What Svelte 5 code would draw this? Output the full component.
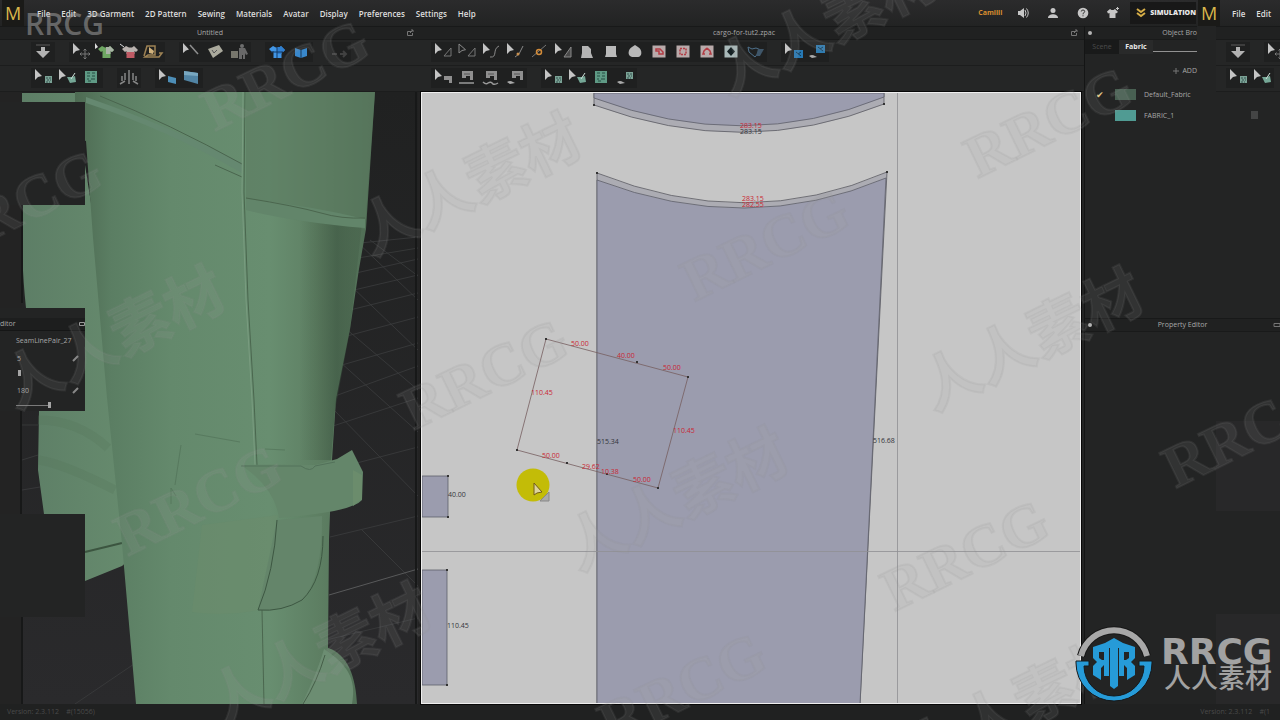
<script lang="ts">
  const menus = ["File", "Edit", "3D Garment", "2D Pattern", "Sewing", "Materials", "Avatar", "Display", "Preferences", "Settings", "Help"]

  const cursor = `<path d="M4 1v11l3-3 4-1z" fill="#c4c4c4"/>`
  const dimCursor = `<path d="M4 2v9l3-2.500 3.500-.8z" fill="none" stroke="#8a8a8a"/>`
  const block = (fill: string, x = 14, y = 8) =>
    `<rect x="${x}" y="${y}" width="7" height="7" fill="${fill}"/><path d="M${x + 1} ${y + 2}h2m1 0h2m-4 2h2m1 0h1m-5 2h2m1 0h1" stroke="#253c3c" stroke-width=".8"/>`
  const shirt = (fill: string, left = fill) =>
    `<path d="M12 4l3 1.500h3L20 4l4 4-2 2-1.500-1v7h-8V9L11 10 8 7z" fill="${left}"/><path d="M16 5h3l1-1 4 4-2 2-1.500-1v3H16z" fill="${fill}"/>`
  const tile = (shape: string, fill = "#b9aaaa") => `<rect x="5.500" y="3.500" width="13" height="12" fill="${fill}"/>${shape}`
  const machine = `<path d="M7 3h11v9h-3V8h-4v2H7z" fill="#8f8f8f"/><path d="M9 6h6" stroke="#555"/>`
  const eye = `<path d="M4 14q3-2 6 0l2 1-5 1z" fill="#aaa"/>`

  const icons: Record<string, string> = {
    down: `<path d="M5 3h14" stroke="#3d3d3d" stroke-width="2"/><path d="M10 5h4v4h5l-7 7-7-7h5z" fill="#b2b2b2"/>`,
    move: `${cursor}<path d="M16 7v10M11 12h10M14.500 8.500L16 7l1.500 1.500M14.500 15.500L16 17l1.500-1.500M12.500 10.500L11 12l1.500 1.500M19.500 10.500L21 12l-1.500 1.500" fill="none" stroke="#777"/>`,
    greenShirt: `<g transform="translate(-3)">${shirt("#a9b3a6", "#6fa763")}</g><path d="M2 1v6l3-2z" fill="#ddd"/>`,
    redShirt: `<g transform="translate(-3)"><path d="M12 4l3 1.500h3L20 4l4 4-2 2-1.500-1v3h-8V9L11 10 8 7z" fill="#b9b2ae"/><path d="M12.500 10h8v6h-8z" fill="#bf5a64"/></g><path d="M3 2l4 3" stroke="#ddd"/>`,
    fold: `<path d="M3 14L6 4h8v9H7l-3 2h14l3-4h-3" fill="none" stroke="#9f8354" stroke-width="1.500"/><path d="M8 5l5 4-1 3-4-1z" fill="#d1b27c"/>`,
    pin: `<path d="M4 1v10l3-2.500 3-1z" fill="#c4c4c4"/><path d="M11 3l8 9" stroke="#8f8f8f" stroke-width="1.500"/>`,
    note: `<path d="M5 7l11-4 4 6-10 7z" fill="#aaa99c"/><path d="M9 8l2 3 3-3" stroke="#555" fill="none"/>`,
    avatar: `<circle cx="15" cy="4" r="2" fill="#6d6d6d"/><path d="M12 6h6l3 6-2 1-1-2v6h-2v-4h-1v4h-3z" fill="#686868"/><rect x="4" y="9" width="7" height="7" fill="#77766c"/>`,
    blueShirt: `<g transform="translate(-4)">${shirt("#2f7fd0", "#4296e5")}</g><path d="M12 5v11M6 10h12" stroke="#123a66"/>`,
    blueFold: `<path d="M6 6l6 2 6-2v8l-6 2-6-2z" fill="#3988cc"/><path d="M12 8v8" stroke="#1a3858"/>`,
    faint: `<path d="M5 12h5m3 0h6M16 9l3 3-3 3" stroke="#414141" stroke-width="2" fill="none"/>`,
    texture: cursor + block("#7ba396"),
    textureTurn: `${cursor}<path d="M12 9l3 6 6-1-1-6-3 1z" fill="#75a796"/><path d="M20 5l-4 6" stroke="#cfe0da"/>`,
    pattern: `<rect x="6" y="3" width="12" height="12" fill="#5f9a85"/><path d="M8 5h3m2 0h3M8 8h3m2 0h3M8 11h2m2 0h4M9 13h3" stroke="#264c43"/>`,
    puppet: `<path d="M12 2v14M8 5v7M16 5v7M5 8v5M19 8v5M3 16l5-3M21 16l-5-3" stroke="#858585" fill="none" stroke-width="1.500"/>`,
    cloth: `${cursor}<path d="M13 8l8 2v6l-8-2z" fill="#4d8eb7"/>`,
    clothBig: `<path d="M5 3l14 2v11L5 12z" fill="#5184a4"/><path d="M5 3l14 2v3L5 7z" fill="#78a7c0"/>`,
    edit: `${cursor}<path d="M13 14l7-8v8z" fill="none" stroke="#777"/>`,
    editDim: `${dimCursor}<path d="M13 14l7-8v8z" fill="none" stroke="#777"/>`,
    curve: `${cursor}<path d="M11 15c8 1 2-8 9-11" fill="none" stroke="#888"/>`,
    points: `${cursor}<path d="M12 15l4-3 4-8" fill="none" stroke="#888"/><circle cx="15" cy="12" r="1.500" fill="#c98f4d"/>`,
    addPoint: `<path d="M5 15L19 3" stroke="#777"/><circle cx="12" cy="10" r="2.500" fill="none" stroke="#d28b39" stroke-width="1.500"/>`,
    editLine: `${cursor}<path d="M13 15l7-10v10z" fill="#4a4a4a" stroke="#888"/>`,
    polygon: `<path d="M7 4h6l3 3v4l2 5H6l1-5z" fill="#b4b4b4"/>`,
    rectangle: `<path d="M7 4h10v8l1 3H6l1-3z" fill="#bababa"/>`,
    circle: `<path d="M12 3l3 2c5 3 4 10 0 10H9C4 14 5 7 9 5z" fill="#b8b8b8"/>`,
    innerPoly: tile(`<path d="M9 7h4l3 3v2h-4V9H9z" fill="none" stroke="#b33c44" stroke-width="1.500"/>`),
    innerRect: tile(`<rect x="9" y="6.500" width="6" height="6" fill="none" stroke="#b33c44" stroke-width="1.500" stroke-dasharray="2 1"/>`),
    innerCircle: tile(`<path d="M12 6l3 3 1 3h-2M12 6L9 9l-1 3h2" fill="none" stroke="#b33c44" stroke-width="1.500"/>`),
    dart: tile(`<path d="M12 5l4 4.500-4 4.500-4-4.500z" fill="#142023"/>`, "#a9b9b9"),
    trace: `<path d="M5 5l4 2 4-1 5 2-6 7-6-5z" fill="none" stroke="#4e718c"/><path d="M15 7h6l-4 7h-4z" fill="#3f5669"/>`,
    blueSelect: `${cursor}<rect x="13" y="8" width="9" height="8" fill="#2679b5"/><path d="M15 10l5 4m0-4l-3 2" stroke="#103956"/>`,
    blueShow: `${eye}<rect x="11" y="3" width="9" height="8" fill="#2f7cb1"/><path d="M13 5l5 4m0-4l-3 2" stroke="#103956"/>`,
    sewEdit: `${cursor}<path d="M13 8h8v7h-3v-3h-5z" fill="#8f8f8f"/>`,
    sew: `${machine}<path d="M4 15h15" stroke="#9a9a9a" stroke-width="1.500"/>`,
    sewFree: `${machine}<path d="M4 14q3 3 5 1 3-2 5 1 2 1 5-1" fill="none" stroke="#9a9a9a" stroke-width="1.500"/>`,
    sewShow: `<g transform="translate(2)">${machine}</g>${eye}`,
    textureShow: eye + block("#7ba396", 13, 4),
  }

  const sceneTools = [
    [["down"], ["move", "greenShirt", "redShirt", "fold"], ["pin", "note", "avatar"], ["blueShirt", "blueFold"], ["faint"]],
    [["texture", "textureTurn", "pattern"], ["puppet"], ["cloth", "clothBig"]],
  ]
  const patternTools = [
    [["edit", "editDim", "curve", "points", "addPoint", "editLine", "polygon", "rectangle", "circle", "innerPoly", "innerRect", "innerCircle", "dart", "trace"], ["blueSelect", "blueShow"]],
    [["sewEdit", "sew", "sewFree", "sewShow"], ["texture", "textureTurn", "pattern", "textureShow"]],
  ]
  const sideTools = [[["down"], ["move"]], [["texture", "textureTurn"]]]

  const fabrics = [
    { name: "Default_Fabric", color: "#486052", active: true },
    { name: "FABRIC_1", color: "#509b93", active: false },
  ]

  const measures = [
    { x: 740, y: 128, text: "283.15", red: true },
    { x: 740, y: 134, text: "283.15", red: false },
    { x: 742, y: 201, text: "283.15", red: true },
    { x: 742, y: 207, text: "282.55", red: true },
    { x: 571, y: 346, text: "50.00", red: true },
    { x: 617, y: 358, text: "40.00", red: true },
    { x: 663, y: 370, text: "50.00", red: true },
    { x: 531, y: 395, text: "110.45", red: true },
    { x: 673, y: 433, text: "110.45", red: true },
    { x: 542, y: 458, text: "50.00", red: true },
    { x: 582, y: 469, text: "29.62", red: true },
    { x: 601, y: 474, text: "10.38", red: true },
    { x: 633, y: 482, text: "50.00", red: true },
    { x: 597, y: 444, text: "515.34", red: false },
    { x: 873, y: 443, text: "516.68", red: false },
    { x: 448, y: 497, text: "40.00", red: false },
    { x: 447, y: 628, text: "110.45", red: false },
  ]

  const corners = [
    [594, 105], [884, 104], [597, 173], [887, 172], [546, 339], [688, 377], [658, 488], [517, 450],
    [637, 362], [567, 463], [607, 474], [448, 476], [448, 517], [447, 570], [447, 685],
  ]

  const latinMarks = [[18, 205], [285, 75], [198, 500], [484, 374], [765, 245], [1048, 122], [965, 555], [682, 688], [1246, 432]]
  const hanMarks = [[114, 339], [470, 186], [827, 26], [677, 501], [1032, 341], [320, 656], [1018, 707]]

  let tab = $state("Fabric")
  let stitch = $state("5")
  let angle = $state("180")
</script>

{#snippet toolRows(rows: string[][][])}
  {#each rows as row}
    <div class="toolbar">
      {#each row as group}
        <div class="tool-group">
          {#each group as name}
            <button class="tool" aria-label={name}>
              <svg viewBox="0 0 24 20">{@html icons[name]}</svg>
            </button>
          {/each}
        </div>
      {/each}
    </div>
  {/each}
{/snippet}

{#snippet popOut()}
  <svg class="pop-out" viewBox="0 0 8 8"><path d="M5 2.500H1.500v4h5V4M4 4l3-3M5 1h2v2" /></svg>
{/snippet}

<div class="page">
  <header>
    <span class="logo">M</span>
    <nav>
      {#each menus as item}
        <button class="menu">{item}</button>
      {/each}
    </nav>
    <div class="account">
      <span class="user">Camilli</span>
      <button class="status" aria-label="Sound">
        <svg viewBox="0 0 12 12"><path d="M1 4h2l4-3v10L3 8H1z" /><path d="M8 3q2 3 0 6M9.500 1.500q3.500 4.500 0 9" class="line" /></svg>
      </button>
      <button class="status" aria-label="Profile">
        <svg viewBox="0 0 12 12"><circle cx="6" cy="3.500" r="2.500" /><path d="M1 11c0-5 10-5 10 0z" /></svg>
      </button>
      <button class="status" aria-label="Help">
        <svg viewBox="0 0 12 12"><circle cx="6" cy="6" r="5.300" /><path d="M4.300 4.500q0-1.500 1.700-1.500t1.700 1.500q0 1-1.700 2v.8M6 8.300v1" class="mark" /></svg>
      </button>
      <button class="status" aria-label="Garments">
        <svg viewBox="0 0 12 12"><path d="M3 2l1.500 1h2L8 2l3 3-2 1.500L8.500 6v5h-6V6L1 6.500 0 4.500z" /><path d="M10.500 0v3M9 1.500h3" class="line" /></svg>
      </button>
      <button class="simulation">
        <svg viewBox="0 0 10 10"><path d="M1 1l4 3 4-3M1 5l4 3 4-3" /></svg>
        SIMULATION
      </button>
    </div>
    <span class="logo">M</span>
    <nav class="side-nav">
      <button class="menu">File</button>
      <button class="menu">Edit</button>
    </nav>
  </header>

  <main>
    <section class="column">
      <div class="titlebar"><span>Untitled</span>{@render popOut()}</div>
      <div class="scene-tools">{@render toolRows(sceneTools)}</div>
      <div class="viewport">
        <svg class="art" viewBox="0 92 420 612" preserveAspectRatio="xMidYMin slice">
          <defs>
            <linearGradient id="leg" x1="0" x2="1">
              <stop offset="0" stop-color="#4d6a52" />
              <stop offset=".12" stop-color="#5b7e63" />
              <stop offset=".32" stop-color="#64896c" />
              <stop offset=".65" stop-color="#688e70" />
              <stop offset=".82" stop-color="#5d7e62" />
              <stop offset="1" stop-color="#4e6b53" />
            </linearGradient>
            <linearGradient id="back" x1="0" x2="1">
              <stop offset="0" stop-color="#5d7e66" />
              <stop offset="1" stop-color="#688d6f" />
            </linearGradient>
            <linearGradient id="shade" x1="0" x2="1">
              <stop offset="0" stop-color="#40583f" stop-opacity="0" />
              <stop offset=".6" stop-color="#364e3b" stop-opacity=".5" />
              <stop offset="1" stop-color="#405943" stop-opacity=".3" />
            </linearGradient>
            <linearGradient id="floor" x1="0" x2="0" y1="0" y2="1">
              <stop offset="0" stop-color="#202121" />
              <stop offset="1" stop-color="#2a2a2c" />
            </linearGradient>
          </defs>
          <rect y="92" width="420" height="612" fill="#232323" />
          <rect x="22" y="92" width="396" height="612" fill="url(#floor)" />
          <path
            class="floor-grid"
            d="M360 243l58-6M358 258l60-10M356 273l62-14M354 290l64-15M350 310l68-17M347 336l71-19M342 365l76-22M335 396l83-30M333 426l85-28M330 470l88-23M330 537l88-21M326 640l92-22M355 240l63 60M370 240l48 36M350 285l68 65M345 328l73 62M340 362l78 70M334 410l84 86M362 530l56 56M22 425h16M22 460l16-5M22 490l18-3M75 704l59-40"
          />
          <path d="M329 595l89-26" stroke="#58595a" />
          <path d="M22 93h53v9H22zM22 205h63v-40l60 380-23 21-37 15v-67H44l-6-44 1-59h46V308H26q-5-45-4-103" fill="url(#back)" />
          <path d="M39 460q25 4 76 30M38 420q40 0 70 28" stroke="#557359" stroke-width="9" opacity=".25" fill="none" />
          <path d="M85 552l37-9" stroke="#3c5540" stroke-width="2" />
          <path d="M75 92h300l-9 137-7 40-9 60-14 70-4 61-3 80-1 108c20 6 28 30 29 56H136l-14-160-15-146-14-160-7-97-11-3z" fill="url(#leg)" />
          <path d="M246 92h129l-10 137-119-30z" fill="#5c7b61" opacity=".6" />
          <path d="M300 210l62 14-12 106-15 80-4 50h-32z" fill="url(#shade)" />
          <path d="M86 103q80 26 156 70v-10q-70-36-156-66z" fill="#658870" />
          <path d="M100 96q70 28 142 68M215 165l27 12" fill="none" stroke="#4a654e" />
          <path d="M246 199q60 6 119 20v9q-70-6-119-18z" fill="#62856a" />
          <path d="M246 198q50 8 75 15 20 6 44 5" fill="none" stroke="#4b664e" />
          <path d="M245 92l-1 100 4 108 6 100 3 65M262 610l2 94" fill="none" stroke="#4b674f" />
          <path d="M243 92l-1 100 4 108 6 100 3 65" fill="none" stroke="#7a9c80" />
          <path d="M181 445l-6 40M171 488v16m0-16l5 8M195 434l45 8M265 449l20 1" stroke="#4b6a51" opacity=".5" />
          <path d="M202 525l76-10-20 95q-33 7-66 2z" fill="#6c8b6c" opacity=".5" />
          <path d="M277 520l-19 90q24 2 44-10 21-23 20-84z" fill="#64856a" />
          <path d="M277 520q-3 52-19 90 24 2 44-10 21-20 21-64" fill="none" stroke="#3d5742" />
          <path d="M241 465q45-1 74 0l22-6 15-9 11 22-1 28q-10 12-83 18-4-30-38-53z" fill="#64866a" />
          <path d="M241 466h60q10 7 14 0l20-4" stroke="#53725a" fill="none" />
          <path d="M362 475v24l-9 7v-36z" fill="#6b8c6c" />
          <path d="M352 704c5-25-5-40-28-55-5 18-14 38-22 55z" fill="#6c8d72" />
          <path d="M325 655q-8 27-22 49" fill="none" stroke="#455e48" />
          <path d="M0 102h85v103H0zM0 308h85v103H0zM0 514h85v103H0z" fill="#232424" />
          <path d="M22 205v98M21 411v103M22 617v87M416 92v612" stroke="#171818" stroke-width="2" />
        </svg>
        <aside class="editor">
          <div class="editor-title"><span>ditor</span><svg viewBox="0 0 6 6"><path d="M.5 1.500h5v3h-5z" /></svg></div>
          <p>SeamLinePair_27</p>
          <input class="value" aria-label="Stitch" bind:value={stitch} />
          <input class="slider bare" type="range" aria-label="Stitch slider" min="0" max="100" value="5" />
          <input class="value" aria-label="Angle" bind:value={angle} />
          <input class="slider" type="range" aria-label="Angle slider" min="0" max="180" value="180" />
          <svg class="pencils" viewBox="0 0 8 40"><path d="M1 7l5-5M1 39l5-5" /></svg>
        </aside>
      </div>
    </section>

    <section class="column">
      <div class="titlebar pattern-title"><span>cargo-for-tut2.zpac</span>{@render popOut()}</div>
      <div>{@render toolRows(patternTools)}</div>
      <div class="board">
        <svg class="art" viewBox="422 93 658 610" preserveAspectRatio="xMidYMin slice">
          <rect x="422" y="93" width="658" height="612" fill="#c6c6c6" />
          <path d="M594 93v12q150 55 290-1V93z" class="seam" />
          <path d="M594 93v5q150 56 290-1v-4z" class="piece" />
          <path d="M597 173q150 60 290-1l-27 532H597z" class="seam" />
          <path d="M597 180q150 57 289-2l-26 526H597z" class="piece" />
          <path d="M422 476h26v41h-26zM422 570h25v115h-25z" class="piece" />
          <path d="M897.500 93v611M422 551.500h658" stroke="#8f8f93" stroke-width=".8" />
          <path d="M546 339l142 38-30 111-141-38z" fill="none" stroke="#765e60" stroke-width=".8" />
          {#each corners as [x, y]}
            <rect x={x - 1} y={y - 1} width="2" height="2" fill="#333" />
          {/each}
          {#each measures as m}
            <text x={m.x} y={m.y} class="measure" class:red={m.red}>{m.text}</text>
          {/each}
          <circle cx="533" cy="485" r="16.500" fill="#c3bc07" />
          <path d="M540 501l9-9v9z" fill="#aaa" stroke="#888" />
          <path d="M534 483v12l3-2 5-1z" fill="#ddd39c" stroke="#725d16" />
        </svg>
      </div>
    </section>

    <section class="column side">
      <div class="side-top">
        <div class="browser">
          <div class="titlebar"><span class="dot"></span><span class="cut">Object Bro</span></div>
          <div class="tabs">
            <button class="tab" class:active={tab === "Scene"} onclick={() => (tab = "Scene")}>Scene</button>
            <button class="tab" class:active={tab === "Fabric"} onclick={() => (tab = "Fabric")}>Fabric</button>
            <span class="tab-line"></span>
          </div>
          <button class="add"><svg viewBox="0 0 8 8"><path d="M4 1v6M1 4h6" /></svg>ADD</button>
          <ul>
            {#each fabrics as fabric}
              <li>
                <label>
                  <input type="checkbox" checked={fabric.active} />
                  <span class="swatch" style="background: {fabric.color}"></span>
                  {fabric.name}
                </label>
              </li>
            {/each}
          </ul>
        </div>
        <div class="strip">
          <div class="titlebar"></div>
          <div>{@render toolRows(sideTools)}</div>
          <svg class="list-icon" viewBox="0 0 8 8"><path d="M0 1h7M0 3h7M0 5h7M0 7h7" /></svg>
        </div>
      </div>
      <div class="side-bottom">
        <div class="titlebar"><span class="dot"></span><span>Property Editor</span><svg class="pop-out edge" viewBox="0 0 8 8"><path d="M2 2.500h6v3H2z" /></svg></div>
        <div class="ghost"><span></span><span></span></div>
      </div>
    </section>
  </main>

  <footer>
    <span>Version: 2.3.112 &nbsp; &nbsp;#(15056)</span>
    <span>Version: 2.3.112 &nbsp; &nbsp;#(1</span>
  </footer>

  <svg class="marks" viewBox="0 0 1280 720" preserveAspectRatio="xMidYMid slice">
    {#each latinMarks as [x, y]}
      <text class="latin" transform="translate({x} {y}) rotate(-26)" y="20">RRCG</text>
    {/each}
    {#each hanMarks as [x, y]}
      <text class="han" transform="translate({x} {y}) rotate(-26)" y="20">人人素材</text>
    {/each}
    <text class="corner" x="25" y="35">RRCG</text>
    <circle cx="1114" cy="663" r="33" fill="#232424" />
    <path d="M1081 656a34 34 0 0 1 66 0" fill="none" stroke="#171717" stroke-width="8" />
    <path d="M1081 656a34 34 0 0 1 66 0" fill="none" stroke="#a8a8a8" stroke-width="6" />
    <path d="M1076 661h13v5h-5a30 30 0 0 0 60 0h-5v-5h13v2a38 38 0 0 1-76 0z" fill="#269bd8" stroke="#151a1d" />
    <g fill="#269bd8" fill-rule="evenodd">
      <path d="M1114 638l9 5 12 4v1H1093v-1l12-4z" />
      <path d="M1110 647h8v39l-4 3-4-3z" />
      <path d="M1119 647h16v11l-4 4 4 4v9l-8 5v-12l-3-3v11h-5zM1124 652v8h2l3-2v-6z" />
      <path d="M1109 647h-16v11l4 4-4 4v9l8 5v-12l3-3v11h5zM1104 652v8h-2l-3-2v-6z" />
    </g>
    <text class="brand" x="1161" y="664">RRCG</text>
    <text class="brand-han" x="1164" y="688">人人素材</text>
  </svg>
</div>

<style>
  :global(body) {
    margin: 0;
    background: #232424;
  }

  .page {
    position: relative;
    display: flex;
    flex-direction: column;
    min-height: 100vh;
    overflow: hidden;
    background: #232424;
    color: #a8a8a8;
    font-family: "Open Sans", "Noto Sans CJK SC", sans-serif;
    font-size: 7px;
    line-height: 10px;
  }

  button,
  input {
    margin: 0;
    padding: 0;
    border: 0;
    background: none;
    color: inherit;
    font: inherit;
  }

  header {
    display: flex;
    align-items: center;
    height: 26px;
    background: linear-gradient(#2b2b2c, #222323);
  }

  .logo {
    width: 22px;
    margin-left: 2px;
    background: #1a1a18;
    color: #d9b64b;
    font-size: 18px;
    line-height: 26px;
    text-align: center;
  }

  nav {
    display: flex;
    gap: 11px;
    padding: 1px 0 0 13px;
  }

  .menu {
    color: #dedede;
    font-size: 8px;
    font-weight: 600;
    white-space: nowrap;
  }

  .account {
    display: flex;
    align-items: center;
    margin-left: auto;
  }

  .user {
    margin-right: 15px;
    color: #d98e2f;
    font-size: 7px;
    font-weight: 700;
  }

  .status {
    display: flex;
    width: 12px;
    margin-right: 18px;
  }

  .status:nth-last-child(2) {
    margin-right: 11px;
  }

  .status svg {
    width: 12px;
    height: 12px;
    fill: #c6c6c6;
  }

  .status .line {
    fill: none;
    stroke: #c6c6c6;
  }

  .status .mark {
    fill: none;
    stroke: #333;
  }

  .simulation {
    display: flex;
    align-items: center;
    gap: 4px;
    height: 22px;
    padding-left: 6px;
    background: #181818;
    color: #e8e8e8;
    font-size: 7px;
    font-weight: 800;
  }

  .simulation svg {
    width: 10px;
    height: 10px;
    fill: none;
    stroke: #d7ae47;
    stroke-width: 2;
  }

  .side-nav {
    width: 48px;
    padding-left: 12px;
  }

  main {
    display: grid;
    grid-template-columns: minmax(0, 420fr) minmax(0, 664fr) minmax(0, 196fr);
    flex: 1;
  }

  .column {
    display: flex;
    flex-direction: column;
    min-width: 0;
  }

  .titlebar {
    position: relative;
    display: flex;
    align-items: center;
    justify-content: center;
    box-sizing: border-box;
    height: 14px;
    border-top: 1px solid #181919;
    border-bottom: 1px solid #191a1a;
    background: #202121;
  }

  .pattern-title {
    padding-right: 16px;
  }

  .pop-out {
    position: absolute;
    right: 6px;
    width: 8px;
    height: 8px;
    fill: none;
    stroke: #757575;
  }

  .edge {
    right: 0;
  }

  .toolbar {
    display: flex;
    align-items: center;
    gap: 14px;
    box-sizing: border-box;
    height: 26px;
    padding: 0 0 1px 11px;
    border-bottom: 1px solid #1c1d1d;
    background: #252626;
    overflow: hidden;
  }

  .scene-tools .toolbar {
    padding-left: 31px;
  }

  .tool-group {
    display: flex;
    background: #1f2020;
  }

  .tool {
    display: flex;
    width: 24px;
    height: 20px;
  }

  .tool svg {
    width: 24px;
    height: 20px;
  }

  .viewport,
  .board {
    position: relative;
    flex: 1;
    overflow: hidden;
  }

  .board {
    margin: 0 3px 0 1px;
    border: 1px solid #eee;
    outline: 1px solid #080808;
  }

  .art {
    position: absolute;
    inset: 0;
    width: 100%;
    height: 100%;
  }

  .floor-grid {
    fill: none;
    stroke: #3b3c3e;
    stroke-width: 0.8;
  }

  .seam {
    fill: #acacb3;
    stroke: #5a5a62;
    stroke-width: 0.8;
  }

  .piece {
    fill: #9b9cae;
    stroke: #5e5f69;
    stroke-width: 0.8;
  }

  .measure {
    fill: #34343a;
    font-size: 7px;
  }

  .red {
    fill: #ca2634;
  }

  .editor {
    position: absolute;
    top: 226px;
    left: 0;
    width: 85px;
  }

  .editor-title {
    display: flex;
    justify-content: space-between;
    align-items: center;
    height: 12px;
    border-bottom: 1px solid #151616;
    background: #1d1e1e;
  }

  .editor-title svg {
    width: 6px;
    height: 6px;
    fill: none;
    stroke: #999;
  }

  .editor p {
    margin: 5px 0 8px 16px;
  }

  .value {
    display: block;
    width: 50px;
    height: 10px;
    margin-left: 17px;
  }

  .slider {
    display: block;
    width: 35px;
    height: 6px;
    margin: 6px 0 0 16px;
    appearance: none;
    background: linear-gradient(#7a7a7a, #7a7a7a) center / 100% 1px no-repeat;
  }

  .bare {
    margin-bottom: 10px;
    background: none;
  }

  .slider::-webkit-slider-thumb {
    width: 3px;
    height: 6px;
    appearance: none;
    background: #a5a5a5;
  }

  .pencils {
    position: absolute;
    top: 36px;
    right: 5px;
    width: 8px;
    height: 40px;
    stroke: #888;
    stroke-width: 2;
  }

  .side {
    border-left: 1px solid #141515;
  }

  .side-top {
    display: flex;
    flex: 292;
  }

  .browser {
    width: 112px;
    flex: none;
  }

  .dot {
    position: absolute;
    left: 3px;
    width: 4px;
    height: 4px;
    border-radius: 2px;
    background: #b5b5b5;
  }

  .cut {
    margin-left: auto;
    white-space: nowrap;
  }

  .tabs {
    display: flex;
    height: 14px;
  }

  .tab {
    width: 34px;
    background: #191a1a;
    color: #4c4c4c;
  }

  .active {
    background: #292a2a;
    color: #e8e8e8;
    font-weight: 700;
  }

  .tab-line {
    flex: 1;
    height: 11px;
    border-bottom: 1px solid #929292;
  }

  .add {
    display: flex;
    align-items: center;
    gap: 2px;
    margin: 12px 0 8px auto;
  }

  .add svg {
    width: 8px;
    height: 8px;
    stroke: #777;
  }

  ul {
    margin: 0;
    padding: 0;
    list-style: none;
  }

  label {
    display: flex;
    align-items: center;
    height: 21px;
    padding-left: 11px;
    white-space: nowrap;
  }

  input[type="checkbox"] {
    width: 10px;
    height: 10px;
    appearance: none;
  }

  input[type="checkbox"]:checked::before {
    content: "✔";
    display: block;
    color: #e0c78b;
    font-size: 9px;
  }

  .swatch {
    width: 21px;
    height: 11px;
    margin: 0 8px 0 9px;
  }

  .strip {
    flex: 1;
    min-width: 0;
    padding-left: 19px;
  }

  .strip .toolbar {
    padding-left: 10px;
  }

  .list-icon {
    display: block;
    width: 8px;
    height: 8px;
    margin: 19px 0 0 35px;
    stroke: #666;
  }

  .side-bottom {
    display: flex;
    flex: 386;
    flex-direction: column;
  }

  .ghost {
    display: flex;
    flex: 1;
    flex-direction: column;
    justify-content: flex-end;
    gap: 103px;
    width: 64px;
    margin-left: auto;
  }

  .ghost span {
    height: 90px;
    background: #282829;
  }

  footer {
    display: flex;
    justify-content: space-between;
    height: 13px;
    padding: 3px 10px 0 7px;
    background: #202121;
    color: #4a4a4a;
  }

  .marks {
    position: absolute;
    inset: 0;
    width: 100%;
    height: 100%;
    pointer-events: none;
  }

  .latin,
  .han {
    fill: #a4a4a4;
    fill-opacity: 0.12;
    stroke: #888;
    stroke-opacity: 0.12;
    stroke-width: 2;
    text-anchor: middle;
  }

  .latin {
    font-family: "Liberation Serif", serif;
    font-size: 60px;
    font-weight: 700;
  }

  .han {
    font-family: "Noto Sans CJK SC", sans-serif;
    font-size: 60px;
    font-weight: 700;
  }

  .corner {
    fill: #aaa;
    fill-opacity: 0.5;
    font-size: 30px;
    font-weight: 600;
  }

  .brand {
    fill: #a2a2a2;
    font-family: "DejaVu Sans", sans-serif;
    font-size: 36px;
    font-weight: 700;
  }

  .brand-han {
    fill: #a2a2a2;
    font-family: "Noto Sans CJK SC", sans-serif;
    font-size: 27px;
    font-weight: 500;
  }
</style>
